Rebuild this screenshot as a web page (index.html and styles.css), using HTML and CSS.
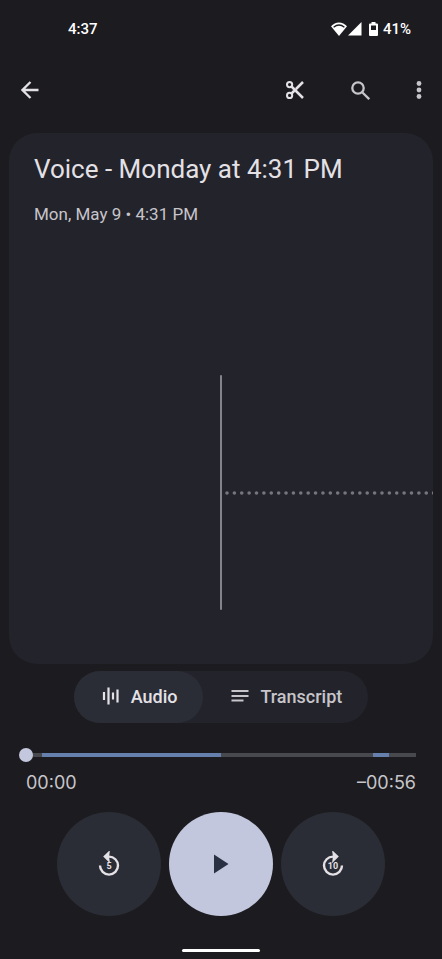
FILE: index.html
```html
<!DOCTYPE html>
<html lang="en">
<head>
<meta charset="utf-8">
<meta name="viewport" content="width=device-width, initial-scale=1">
<title>Recorder</title>
<link rel="stylesheet" href="styles.css">
</head>
<body>
<div class="screen">
  <div class="status">
    <span class="clock">4:37</span>
    <span class="status-icons">
      <svg width="16" height="14" viewBox="0 0 16 14" aria-hidden="true"><path d="M8 14 0 4.300C2.200 1.600 5 .4 8 .4s5.800 1.200 8 3.900z" fill="#fff"/><path d="M2.600 5.200Q8 .8 13.400 5.200" fill="none" stroke="#1c1b1f" stroke-width="1.300"/></svg>
      <svg width="14" height="14" viewBox="0 0 14 14" aria-hidden="true"><path d="M13.500 0v13.500H0z" fill="#fff"/></svg>
      <svg class="battery" width="9" height="14" viewBox="0 0 9 14" aria-hidden="true"><path d="M2.500 0h4v1.400H8q1 0 1 1V13q0 1-1 1H1q-1 0-1-1V2.400q0-1 1-1h1.500z" fill="#fff"/><path d="M2 3.500h5V8H2z" fill="#1c1b1f"/></svg>
      <span>41%</span>
    </span>
  </div>

  <header class="toolbar">
    <button class="icon-btn" type="button" aria-label="Back">
      <svg width="18" height="18" viewBox="0 0 18 18"><path d="M17.500 9H1.500M9.500 1 1.500 9l8 8" fill="none" stroke="#e4e1e6" stroke-width="2.300"/></svg>
    </button>
    <button class="icon-btn cut" type="button" aria-label="Trim">
      <svg width="18" height="18" viewBox="0 0 18 18" fill="none" stroke="#e4e1e6" stroke-width="2"><circle cx="3.600" cy="3.600" r="2.600"/><circle cx="3.600" cy="14.400" r="2.600"/><path d="M5.500 5.500 17 17M5.500 12.500l3-3M10 8l7-7" stroke-width="2.500"/></svg>
    </button>
    <button class="icon-btn" type="button" aria-label="Search">
      <svg width="19" height="19" viewBox="0 0 19 19" fill="none" stroke="#c7c5ca" stroke-width="2.300"><circle cx="7" cy="7" r="5.700"/><path d="m11.200 11.200 7 7"/></svg>
    </button>
    <button class="icon-btn more" type="button" aria-label="More options">
      <svg width="6" height="18" viewBox="0 0 6 18" fill="#c7c5ca"><circle cx="3" cy="2.500" r="2.400"/><circle cx="3" cy="9" r="2.400"/><circle cx="3" cy="15.500" r="2.400"/></svg>
    </button>
  </header>

  <main class="card">
    <h1>Voice - Monday at 4:31 PM</h1>
    <p class="date">Mon, May 9 • 4:31 PM</p>
    <div class="wave">
      <span class="playhead"></span>
      <svg class="dots" width="100%" height="4" aria-hidden="true"><line x1="5" y1="2" x2="200%" y2="2" stroke="#77767d" stroke-width="3.600" stroke-linecap="round" stroke-dasharray="0 7.380"/></svg>
    </div>
  </main>

  <div class="tabs" role="tablist">
    <button class="tab active" type="button" role="tab" aria-selected="true">
      <svg width="18" height="18" viewBox="0 0 18 18" fill="none" stroke="#e4e1e6" stroke-width="2.200"><path d="M2 5v8M6.500 .5v17M11 5.500v7M15.500 2.500v13"/></svg>
      Audio
    </button>
    <button class="tab" type="button" role="tab" aria-selected="false">
      <svg width="18" height="18" viewBox="0 0 18 18" fill="none" stroke="#c7c5ca" stroke-width="2"><path d="M.5 4h17M.5 9h17M.5 13.500h12"/></svg>
      Transcript
    </button>
  </div>

  <div class="seek">
    <input type="range" min="0" max="56" value="0" aria-label="Playback position">
    <div class="times"><span>00:00</span><span>–00:56</span></div>
  </div>

  <div class="controls">
    <button class="round" type="button" aria-label="Rewind 5 seconds">
      <svg width="22" height="26" viewBox="0 0 22 26"><path d="M2 14.600A9 9 0 1 0 11 5.600H8" fill="none" stroke="#e4e1e6" stroke-width="2.400"/><path d="m10.800 1.300-4.400 4.300 4.400 4.300-.6-4.300z" fill="#e4e1e6" stroke="#e4e1e6" stroke-width="1.700"/><text class="glyph" x="11" y="18" text-anchor="middle">5</text></svg>
    </button>
    <button class="round play" type="button" aria-label="Play">
      <svg width="16" height="20" viewBox="0 0 16 20"><path d="M1 .5v19L15.500 10z" fill="#293042"/></svg>
    </button>
    <button class="round" type="button" aria-label="Forward 10 seconds">
      <svg width="22" height="26" viewBox="0 0 22 26"><path d="M20 14.600A9 9 0 1 1 11 5.600h3" fill="none" stroke="#e4e1e6" stroke-width="2.400"/><path d="m11.200 1.300 4.400 4.300-4.400 4.300.6-4.300z" fill="#e4e1e6" stroke="#e4e1e6" stroke-width="1.700"/><text class="glyph" x="11" y="18" text-anchor="middle">10</text></svg>
    </button>
  </div>
  <div class="home"></div>
</div>
</body>
</html>
```
FILE: styles.css
```css
* { box-sizing: border-box; }

body {
  margin: 0;
  background: #1c1b1f;
  color: #e4e1e6;
  font-family: Roboto, "Liberation Sans", sans-serif;
}

button {
  border: 0;
  padding: 0;
  background: none;
  color: inherit;
  font: inherit;
  cursor: pointer;
}

svg { display: block; flex: none; }

.screen {
  display: flex;
  flex-direction: column;
  min-height: 100vh;
}

.status {
  display: flex;
  justify-content: space-between;
  align-items: center;
  height: 58px;
  padding: 0 31px 0 68px;
  color: #fff;
  font-size: 15px;
  font-weight: 500;
}

.status-icons { display: flex; align-items: center; gap: 1px; }
.battery { margin: 0 4px 0 6px; }

.toolbar {
  display: flex;
  align-items: center;
  height: 64px;
  margin-bottom: 11px;
  padding: 0 8px 0 10px;
}

.icon-btn {
  display: grid;
  place-items: center;
  width: 40px;
  height: 40px;
}

.cut { margin: 0 25px 0 auto; }
.more { width: 30px; margin-left: 24px; }

.card {
  display: flex;
  flex-direction: column;
  flex: 1;
  margin: 0 9px;
  background: #23232b;
  border-radius: 28px;
  overflow: hidden;
}

h1, .date { margin: 0 25px; font-weight: 400; }
h1 { margin-top: 20px; font-size: 26px; line-height: 32px; }
.date { margin-top: 17px; color: #c7c5ca; font-size: 17px; line-height: 24px; }

.wave {
  display: grid;
  grid-template-columns: 1fr 2px 1fr;
  align-items: center;
  flex: 1;
  min-height: 240px;
  padding: 149px 0 54px;
}

.playhead {
  grid-column: 2;
  align-self: stretch;
  border-radius: 1px;
  background: #85848c;
}

.tabs {
  display: flex;
  align-self: center;
  margin-top: 7px;
  border-radius: 26px;
  background: #23232b;
}

.tab {
  display: flex;
  align-items: center;
  gap: 11px;
  height: 52px;
  padding: 0 26px 2px 28px;
  border-radius: 26px;
  color: #c7c5ca;
  font-size: 18px;
  font-weight: 500;
}

.tab.active { background: #2b2d36; color: #e4e1e6; }

.seek { margin-top: 22px; padding: 0 19px; }

.seek input {
  display: block;
  width: 100%;
  height: 20px;
  margin: 0;
  appearance: none;
  background: linear-gradient(90deg, #48484f 4%, #6580ad 4% 50%, #48484f 50% 89%, #6580ad 89% 93%, #48484f 93%) center / calc(100% - 14px) 4px no-repeat;
}

.seek input::-webkit-slider-thumb {
  appearance: none;
  width: 14px;
  height: 14px;
  border-radius: 50%;
  background: #c4c8df;
}

.times {
  display: flex;
  justify-content: space-between;
  padding: 6px 7px 0;
  color: #c7c5ca;
  font-family: Inter, Roboto, sans-serif;
  font-size: 18px;
  line-height: 24px;
}

.controls {
  display: flex;
  justify-content: center;
  gap: 8px;
  margin-top: 17px;
}

.round {
  display: grid;
  place-items: center;
  width: 104px;
  height: 104px;
  border-radius: 50%;
  background: #2b2d36;
}

.round.play { background: #c2c7dd; }

.glyph { fill: #e4e1e6; font-size: 9px; font-weight: 700; }

.home {
  align-self: center;
  width: 78px;
  height: 3px;
  margin: 33px 0 7px;
  border-radius: 2px;
  background: #fff;
}
```
